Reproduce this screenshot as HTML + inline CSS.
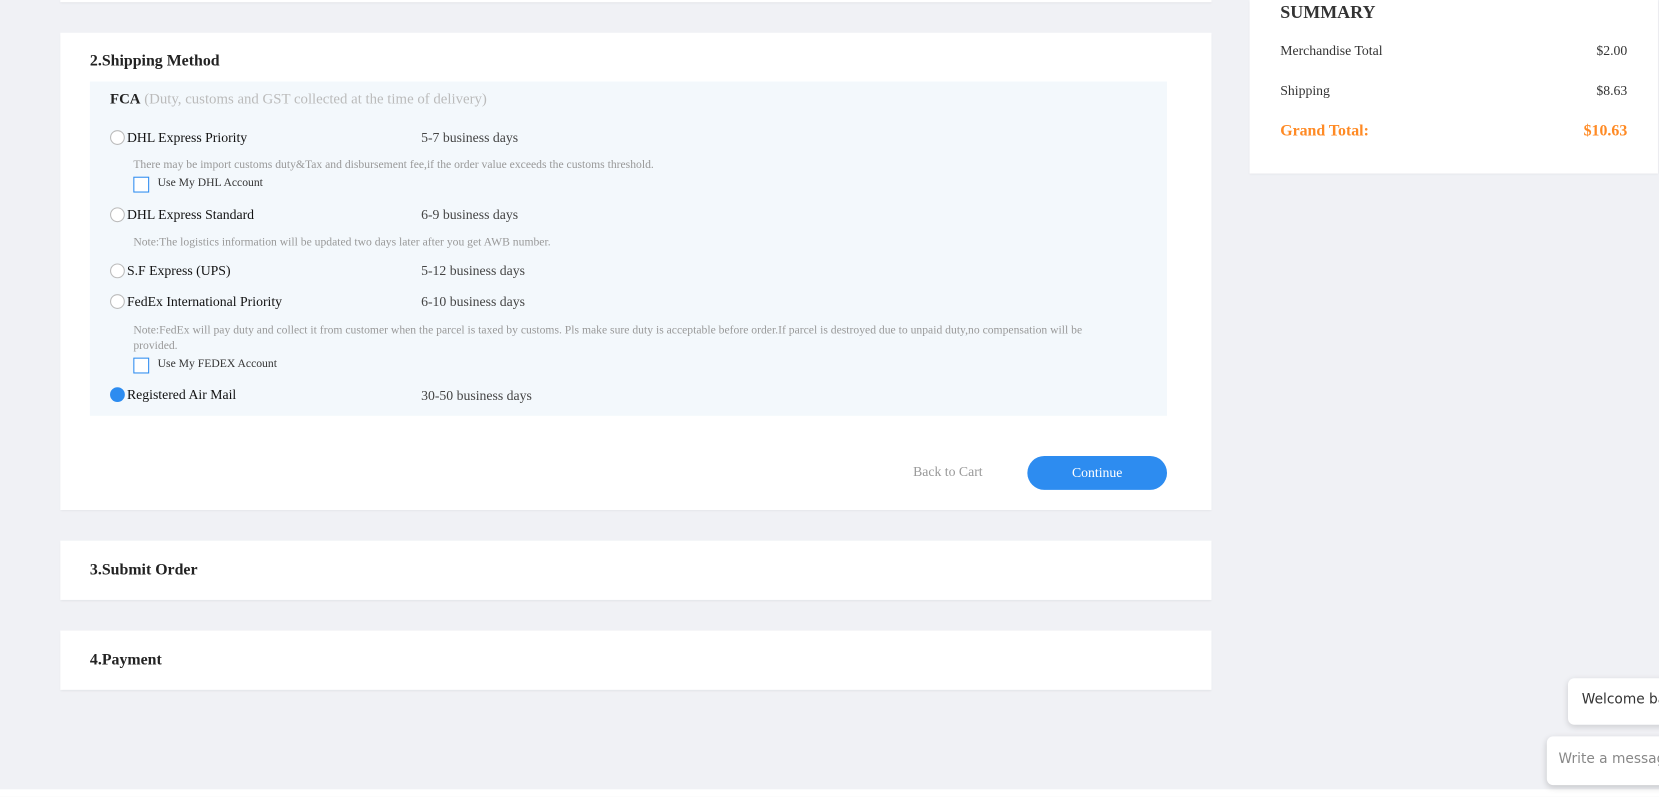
<!DOCTYPE html>
<html><head><meta charset="utf-8"><style>
*{margin:0;padding:0;box-sizing:border-box}
html,body{width:1659px;height:797px;overflow:hidden;background:#f0f1f5}
#w{position:absolute;left:0;top:0;width:1568px;height:753px;transform:scale(1.05804);transform-origin:0 0;font-family:"Liberation Serif",serif;color:#222;overflow:hidden}
.a{position:absolute;white-space:nowrap}
.card{position:absolute;background:#fff;box-shadow:0 1px 2px rgba(0,0,0,.06)}
.r{position:absolute;width:14px;height:14px;border:1px solid #bbb;border-radius:50%;background:#fff}
.cb{position:absolute;width:15px;height:15px;border:1px solid #2d8cf0;background:#fff}
.n{font-size:13px;color:#111}
.d{font-size:13px;color:#444}
.s{font-size:11px;color:#999}
</style></head><body><div id="w">
<div class="card" style="left:57px;top:0;width:1088px;height:2px"></div>
<div class="card" style="left:57px;top:31px;width:1088px;height:451px"></div>
<div class="a" style="left:85px;top:50px;font-size:15px;font-weight:bold">2.Shipping Method</div>
<div style="position:absolute;left:85px;top:77px;width:1018px;height:316px;background:#f3f8fc"></div>
<div class="a" style="left:104px;top:87px;font-size:14px"><b>FCA</b> <span style="color:#bbb">(Duty, customs and GST collected at the time of delivery)</span></div>

<div class="r" style="left:104px;top:123px"></div><div class="a n" style="left:120px;top:122px">DHL Express Priority</div><div class="a d" style="left:398px;top:122px">5-7 business days</div>
<div class="a s" style="left:126px;top:150px">There may be import customs duty&amp;Tax and disbursement fee,if the order value exceeds the customs threshold.</div>
<div class="cb" style="left:126px;top:167px"></div><div class="a s" style="left:149px;top:167px;color:#333">Use My DHL Account</div>

<div class="r" style="left:104px;top:196px"></div><div class="a n" style="left:120px;top:195px">DHL Express Standard</div><div class="a d" style="left:398px;top:195px">6-9 business days</div>
<div class="a s" style="left:126px;top:223px">Note:The logistics information will be updated two days later after you get AWB number.</div>

<div class="r" style="left:104px;top:249px"></div><div class="a n" style="left:120px;top:248px">S.F Express (UPS)</div><div class="a d" style="left:398px;top:248px">5-12 business days</div>
<div class="r" style="left:104px;top:278px"></div><div class="a n" style="left:120px;top:277px">FedEx International Priority</div><div class="a d" style="left:398px;top:277px">6-10 business days</div>
<div class="a s" style="left:126px;top:306px">Note:FedEx will pay duty and collect it from customer when the parcel is taxed by customs. Pls make sure duty is acceptable before order.If parcel is destroyed due to unpaid duty,no compensation will be</div>
<div class="a s" style="left:126px;top:321px">provided.</div>
<div class="cb" style="left:126px;top:338px"></div><div class="a s" style="left:149px;top:338px;color:#333">Use My FEDEX Account</div>

<div class="r" style="left:104px;top:366px;background:#2d8cf0;border-color:#2d8cf0"></div><div class="a n" style="left:120px;top:365px">Registered Air Mail</div><div class="a d" style="left:398px;top:366px">30-50 business days</div>

<div class="a" style="left:863px;top:438px;font-size:13px;color:#999">Back to Cart</div>
<div style="position:absolute;left:971px;top:431px;width:132px;height:32px;border-radius:16px;background:#2d8cf0;color:#fff;font-size:13px;text-align:center;line-height:32px">Continue</div>

<div class="card" style="left:57px;top:511px;width:1088px;height:56px"></div>
<div class="a" style="left:85px;top:531px;font-size:15px;font-weight:bold">3.Submit Order</div>
<div class="card" style="left:57px;top:596px;width:1088px;height:56px"></div>
<div class="a" style="left:85px;top:616px;font-size:15px;font-weight:bold">4.Payment</div>

<div class="card" style="left:1181px;top:0;width:386px;height:164px"></div>
<div class="a" style="left:1210px;top:2px;font-size:17px;font-weight:bold;color:#333">SUMMARY</div>
<div class="a" style="left:1210px;top:40px;font-size:13px;color:#333">Merchandise Total</div><div class="a" style="right:30px;top:40px;font-size:13px;color:#333">$2.00</div>
<div class="a" style="left:1210px;top:78px;font-size:13px;color:#333">Shipping</div><div class="a" style="right:30px;top:78px;font-size:13px;color:#333">$8.63</div>
<div class="a" style="left:1210px;top:116px;font-size:15px;font-weight:bold;color:#ff8a24">Grand Total:</div><div class="a" style="right:30px;top:116px;font-size:15px;font-weight:bold;color:#ff8a24">$10.63</div>

<div style="position:absolute;left:0;top:746px;width:1568px;height:10px;background:#fff"></div>
<div style="position:absolute;left:1482px;top:641px;width:200px;height:44px;background:#fff;border-radius:6px;box-shadow:0 2px 6px rgba(0,0,0,.15);font-family:'DejaVu Sans',sans-serif;font-size:13px;color:#333;padding:13px 0 0 13px;white-space:nowrap">Welcome back</div>
<div style="position:absolute;left:1462px;top:696px;width:220px;height:46px;background:#fff;border-radius:6px;box-shadow:0 2px 6px rgba(0,0,0,.18);font-family:'DejaVu Sans',sans-serif;font-size:13px;color:#888;padding:14px 0 0 11px;white-space:nowrap">Write a message</div>
</div></body></html>
